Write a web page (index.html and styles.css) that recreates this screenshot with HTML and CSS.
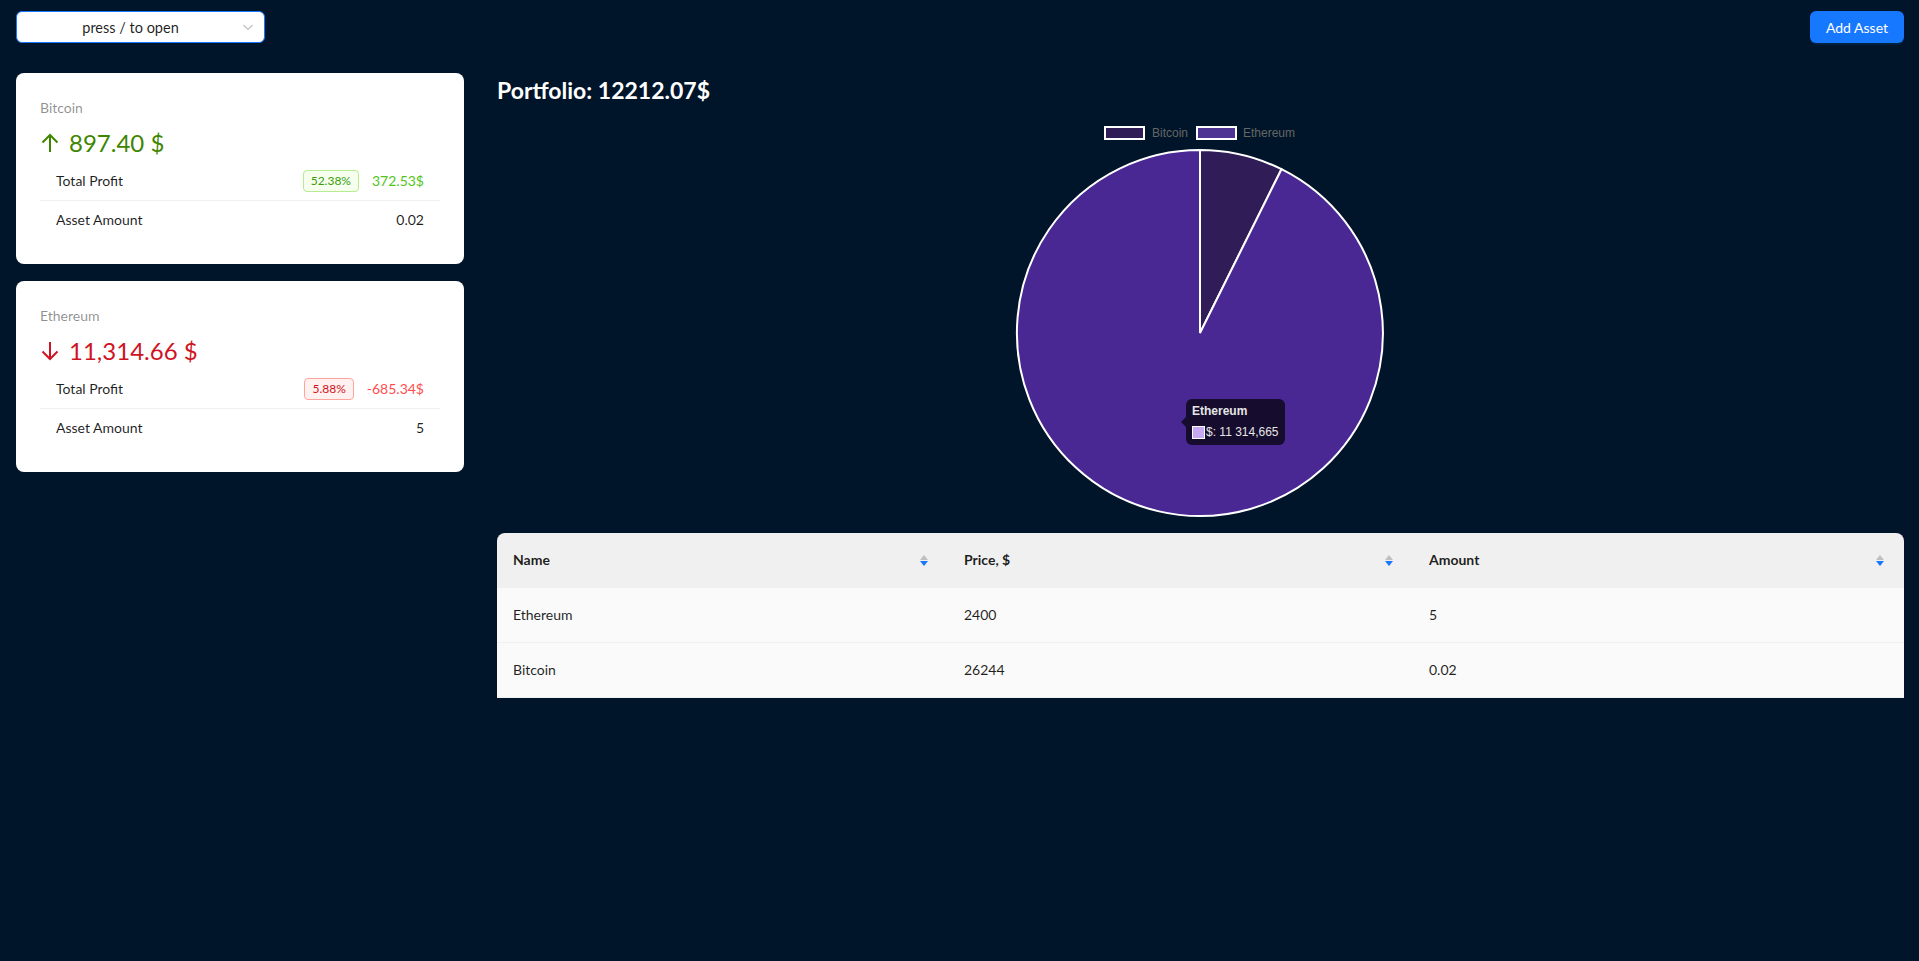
FILE: index.html
```html
<!DOCTYPE html>
<html lang="en">
<head>
<meta charset="utf-8">
<title>Portfolio</title>
<link rel="stylesheet" href="styles.css">
</head>
<body>
<header class="topbar">
  <div class="select">
    <span class="select-text">press / to open</span>
    <svg class="select-arrow" width="12" height="12" viewBox="0 0 12 12"><path d="M1.5 4 L6 8.5 L10.5 4" fill="none" stroke="#bfbfbf" stroke-width="1.2"/></svg>
  </div>
  <button class="btn-primary">Add Asset</button>
</header>

<div class="content">
  <aside class="sidebar">
    <section class="card">
      <div class="stat-title">Bitcoin</div>
      <div class="stat-value up">
        <svg class="arrow" width="20" height="20" viewBox="0 0 20 20"><path d="M10 2 V19 M2.5 9.5 L10 2 L17.5 9.5" fill="none" stroke="currentColor" stroke-width="2"/></svg>
        <span>897.40 $</span>
      </div>
      <ul class="list">
        <li class="item"><span>Total Profit</span><span class="right"><span class="tag tag-green">52.38%</span><span class="profit-green">372.53$</span></span></li>
        <li class="item"><span>Asset Amount</span><span>0.02</span></li>
      </ul>
    </section>
    <section class="card">
      <div class="stat-title">Ethereum</div>
      <div class="stat-value down">
        <svg class="arrow" width="20" height="20" viewBox="0 0 20 20"><path d="M10 1 V18 M2.5 10.5 L10 18 L17.5 10.5" fill="none" stroke="currentColor" stroke-width="2"/></svg>
        <span>11,314.66 $</span>
      </div>
      <ul class="list">
        <li class="item"><span>Total Profit</span><span class="right"><span class="tag tag-red">5.88%</span><span class="profit-red">-685.34$</span></span></li>
        <li class="item"><span>Asset Amount</span><span>5</span></li>
      </ul>
    </section>
  </aside>

  <main class="main">
    <h2 class="title">Portfolio: 12212.07$</h2>
    <div class="chart">
      <svg class="chart-svg" width="1407" height="426" viewBox="0 0 1407 426">
        <rect x="608" y="20" width="39" height="12" fill="#301c57" stroke="#ffffff" stroke-width="2"/>
        <text x="655" y="30" class="legend-text">Bitcoin</text>
        <rect x="700" y="20" width="39" height="12" fill="#4e3394" stroke="#ffffff" stroke-width="2"/>
        <text x="746" y="30" class="legend-text">Ethereum</text>
        <path d="M703 226 L703 43 A183 183 0 0 1 784.5 62.2 Z" fill="#301c57" stroke="#ffffff" stroke-width="2"/>
        <path d="M703 226 L784.5 62.2 A183 183 0 1 1 703 43 Z" fill="#4a2893" stroke="#ffffff" stroke-width="2"/>
      </svg>
      <div class="tooltip">
        <div class="tt-title">Ethereum</div>
        <div class="tt-body"><span class="tt-swatch"></span>$: 11 314,665</div>
      </div>
    </div>
    <table class="table">
      <colgroup><col class="c1"><col class="c2"><col class="c3"></colgroup>
      <thead>
        <tr>
          <th class="th-first"><div class="th-inner"><span>Name</span><span class="sorter"><i class="s-up"></i><i class="s-down"></i></span></div></th>
          <th><div class="th-inner"><span>Price, $</span><span class="sorter"><i class="s-up"></i><i class="s-down"></i></span></div></th>
          <th class="th-last"><div class="th-inner"><span>Amount</span><span class="sorter"><i class="s-up"></i><i class="s-down"></i></span></div></th>
        </tr>
      </thead>
      <tbody>
        <tr><td>Ethereum</td><td>2400</td><td>5</td></tr>
        <tr><td>Bitcoin</td><td>26244</td><td>0.02</td></tr>
      </tbody>
    </table>
  </main>
</div>
</body>
</html>
```

FILE: styles.css
```css
* { box-sizing: border-box; }

html, body {
  margin: 0;
  min-height: 100%;
  background: #001529;
}

body {
  font-family: Lato, "Open Sans", sans-serif;
  font-size: 14px;
  color: rgba(0, 0, 0, 0.88);
  min-height: 961px;
}

.topbar {
  display: flex;
  justify-content: space-between;
  align-items: center;
  padding: 11px 15px 0 16px;
}

.select {
  position: relative;
  width: 249px;
  height: 32px;
  background: #fff;
  border: 1px solid #1677ff;
  border-radius: 6px;
  display: flex;
  align-items: center;
  justify-content: center;
  padding-right: 20px;
}

.select-text {
  font-size: 14.5px;
  color: rgba(0, 0, 0, 0.88);
}

.select-arrow {
  position: absolute;
  right: 10px;
  top: 9px;
}

.btn-primary {
  width: 94px;
  height: 32px;
  border: none;
  border-radius: 6px;
  background: #1677ff;
  color: #fff;
  font-family: inherit;
  font-size: 14px;
  padding: 0;
  box-shadow: 0 2px 0 rgba(5, 145, 255, 0.1);
}

.content {
  display: flex;
  gap: 33px;
  padding: 30px 15px 0 16px;
}

.sidebar {
  width: 448px;
  flex: none;
  display: flex;
  flex-direction: column;
  gap: 17px;
}

.card {
  background: #fff;
  border-radius: 8px;
  padding: 24px 24px 25px;
}

.stat-title {
  color: rgba(0, 0, 0, 0.45);
  font-size: 14px;
  line-height: 22px;
  margin-bottom: 4px;
}

.stat-value {
  display: flex;
  align-items: center;
  gap: 9px;
  font-size: 24px;
  line-height: 39px;
}

.stat-value.up { color: #3f8600; }
.stat-value.down { color: #cf1322; }

.arrow { flex: none; }

.list {
  list-style: none;
  margin: 0;
  padding: 0;
}

.item {
  display: flex;
  justify-content: space-between;
  align-items: center;
  padding: 8px 16px;
  line-height: 22px;
  color: rgba(0, 0, 0, 0.88);
}

.item + .item {
  border-top: 1px solid rgba(5, 5, 5, 0.06);
}

.right {
  display: flex;
  align-items: center;
}

.tag {
  font-size: 12px;
  line-height: 20px;
  padding: 0 7px;
  border-radius: 4px;
  border: 1px solid;
  margin-right: 13px;
}

.tag-green { color: #389e0d; background: #f6ffed; border-color: #b7eb8f; }
.tag-red { color: #cf1322; background: #fff1f0; border-color: #ffa39e; }
.profit-green { color: #52c41a; }
.profit-red { color: #ff4d4f; }

.main {
  flex: 1;
  min-width: 0;
}

.title {
  margin: 0;
  color: #fff;
  font-size: 23px;
  font-weight: 700;
  line-height: 34px;
}

.chart {
  position: relative;
  height: 426px;
}

.chart-svg {
  display: block;
}

.legend-text {
  font-family: "Liberation Sans", Arial, sans-serif;
  font-size: 12px;
  fill: #666;
}

.tooltip {
  position: absolute;
  left: 689px;
  top: 292px;
  height: 46px;
  background: #160c2d;
  border-radius: 6px;
  padding: 5px 6px;
  font-family: "Liberation Sans", Arial, sans-serif;
  font-size: 12px;
  color: #e6e6e6;
  white-space: nowrap;
}

.tooltip::before {
  content: "";
  position: absolute;
  left: -5px;
  top: 18px;
  border-top: 5px solid transparent;
  border-bottom: 5px solid transparent;
  border-right: 5px solid #160c2d;
}

.tt-title {
  font-weight: 700;
  line-height: 15px;
  margin-bottom: 6px;
}

.tt-body {
  display: flex;
  align-items: center;
  line-height: 15px;
}

.tt-swatch {
  width: 13px;
  height: 13px;
  background: #c6a9f0;
  border: 1px solid #fff;
  margin-right: 1px;
}

.table {
  width: 100%;
  border-collapse: separate;
  border-spacing: 0;
  table-layout: fixed;
  font-size: 14px;
}

.c1 { width: 451px; }
.c2 { width: 465px; }
.c3 { width: 491px; }

.table th {
  background: #f0f0f0;
  text-align: left;
  font-weight: 700;
  padding: 16px;
  line-height: 22px;
  border-bottom: 1px solid #f0f0f0;
  color: rgba(0, 0, 0, 0.88);
}

.th-first { border-top-left-radius: 8px; }
.th-last { border-top-right-radius: 8px; }

.th-inner {
  display: flex;
  justify-content: space-between;
  align-items: center;
}

.sorter {
  display: flex;
  flex-direction: column;
  gap: 1px;
  margin-right: 4px;
}

.s-up, .s-down {
  display: block;
  width: 0;
  height: 0;
  border-left: 4px solid transparent;
  border-right: 4px solid transparent;
}

.s-up { border-bottom: 5px solid #bfbfbf; }
.s-down { border-top: 5px solid #1677ff; }

.table td {
  background: #fafafa;
  padding: 16px;
  line-height: 22px;
  border-bottom: 1px solid #f0f0f0;
}
```
